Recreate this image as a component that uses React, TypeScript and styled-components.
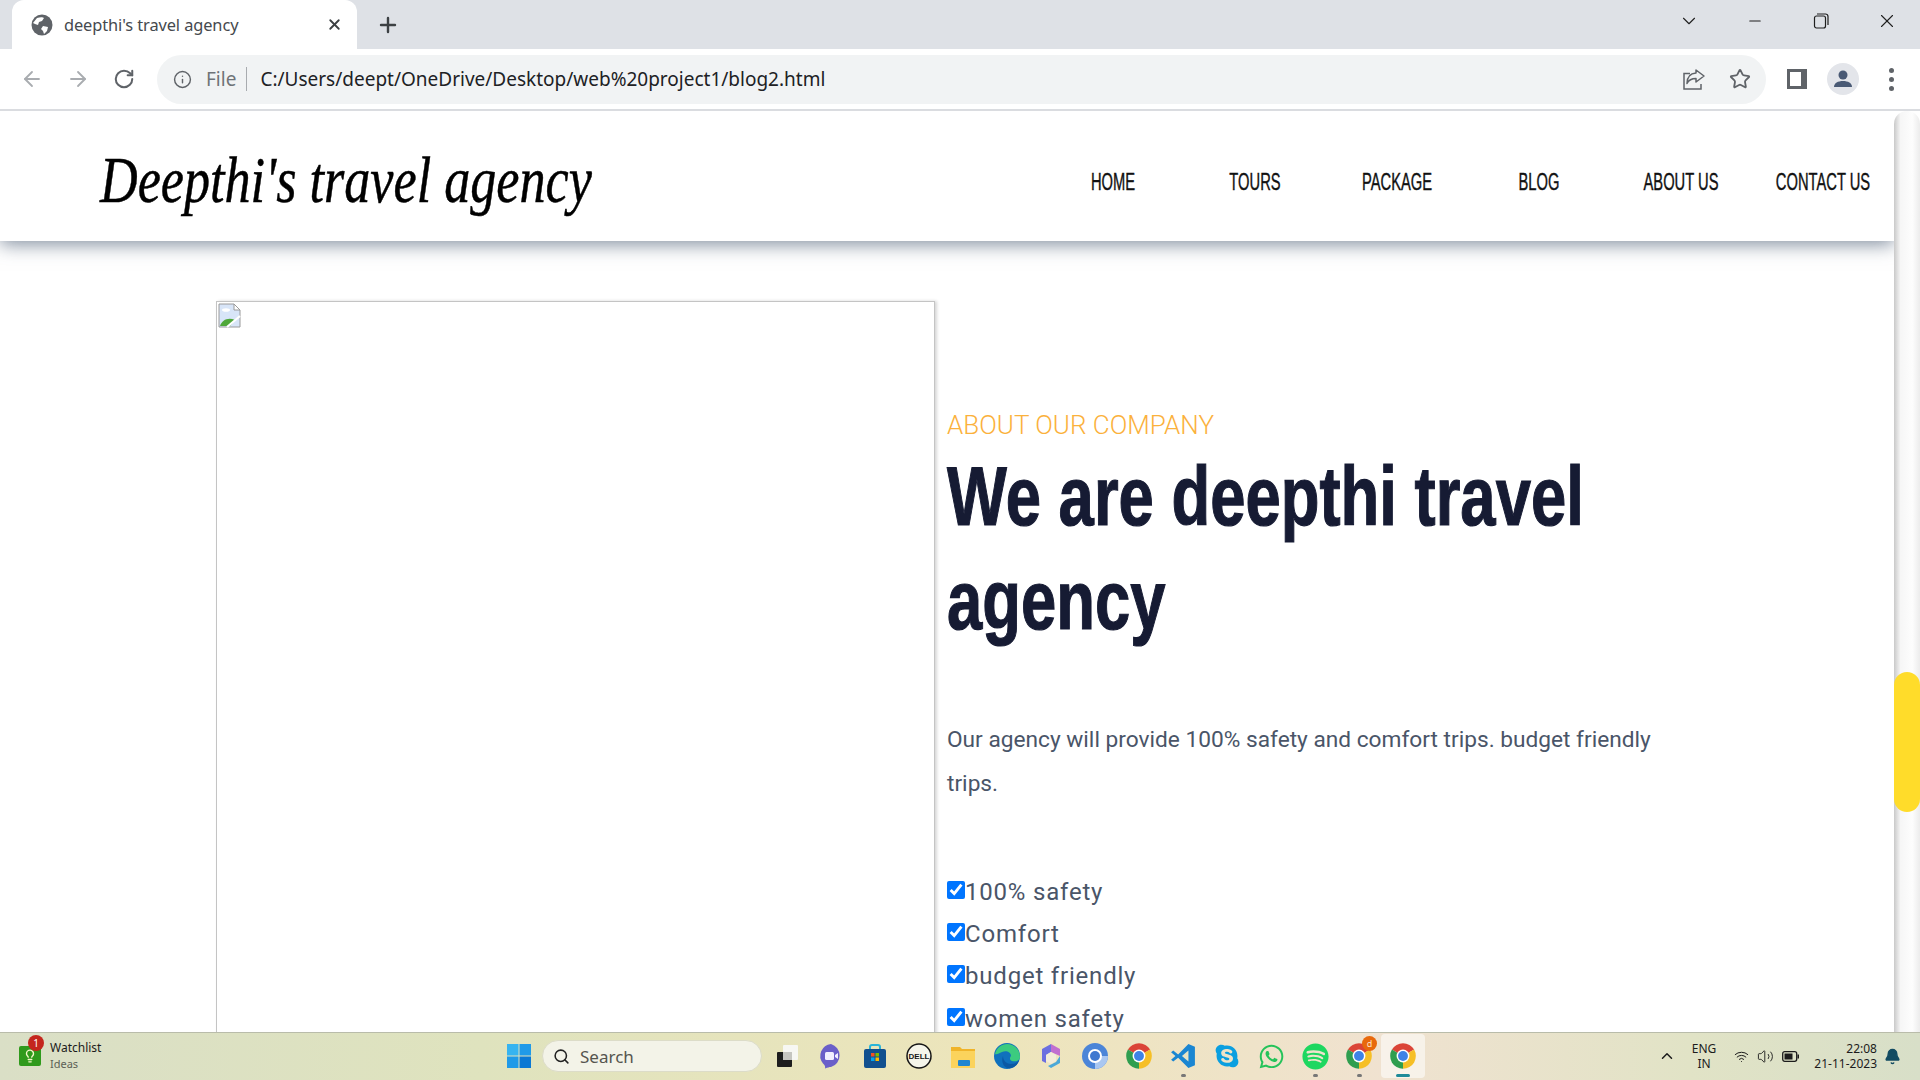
import styled, { createGlobalStyle } from "styled-components";
import { ArrowLeft, ArrowRight, RotateCw, Info, Star, X, Plus, ChevronDown, ChevronUp, Minus, Search, Wifi, Volume2, Bell, Lightbulb } from "lucide-react";
import { FaSpotify, FaWhatsapp, FaSkype } from "react-icons/fa";

const Global = createGlobalStyle`
  html, body { margin: 0; padding: 0; height: 100%; overflow: hidden; background: #fff; }
  * { box-sizing: border-box; }
`;

const Screen = styled.div`
  display: flex;
  flex-direction: column;
  width: 1920px;
  height: 1080px;
  overflow: hidden;
  font-family: "Noto Sans", "Open Sans", sans-serif;
`;

const TabStrip = styled.div`
  display: flex;
  align-items: stretch;
  height: 49px;
  flex: none;
  padding-left: 12px;
  background: #dee1e6;
`;

const Tab = styled.div`
  display: flex;
  align-items: center;
  width: 345px;
  padding: 0 14px 0 19px;
  background: #fff;
  border-radius: 12px 12px 0 0;
  color: #45494e;
  font-size: 16.4px;
`;

const TabTitle = styled.span`
  flex: 1;
  margin-left: 11px;
  letter-spacing: -0.1px;
`;

const NewTab = styled.div`
  display: flex;
  align-items: center;
  justify-content: center;
  width: 32px;
  margin-left: 15px;
  color: #3c4043;
`;

const WindowControls = styled.div`
  display: flex;
  margin-left: auto;
  color: #1f1f1f;
`;

const WindowButton = styled.div`
  display: flex;
  align-items: center;
  justify-content: center;
  width: 66px;
  height: 42px;
`;

const Toolbar = styled.div`
  display: flex;
  align-items: center;
  flex: none;
  height: 62px;
  padding-left: 9px;
  background: #fff;
  border-bottom: 2px solid #dadce0;
`;

const NavButton = styled.div<{ $dim?: boolean }>`
  display: flex;
  align-items: center;
  justify-content: center;
  width: 46px;
  color: ${(p) => (p.$dim ? "#a9acb0" : "#5f6368")};
`;

const AddressBar = styled.div`
  display: flex;
  align-items: center;
  width: 1609px;
  height: 49px;
  margin-left: 10px;
  padding: 0 15px 0 16px;
  background: #f1f3f4;
  border-radius: 25px;
  color: #5f6368;
  font-size: 19px;
`;

const FileLabel = styled.span`
  margin-left: 14px;
  padding-right: 10px;
  border-right: 1px solid #a8abaf;
  line-height: 24px;
  color: #6f7378;
`;

const Url = styled.span`
  flex: 1;
  margin-left: 13px;
  color: #202124;
`;

const BarIcons = styled.div`
  display: flex;
  gap: 23px;
  align-items: center;
`;

const Avatar = styled.div`
  display: flex;
  align-items: center;
  justify-content: center;
  width: 32px;
  height: 32px;
  border-radius: 50%;
  background: #e3e5ea;
`;

const ToolbarEnd = styled.div`
  display: flex;
  align-items: center;
  margin-left: 21px;
  gap: 20px;
`;

const MenuDots = styled.div`
  display: flex;
  flex-direction: column;
  gap: 4px;
  margin-left: 10px;
  & > i {
    display: block;
    width: 5px;
    height: 5px;
    border-radius: 50%;
    background: #5f6368;
  }
`;

const Viewport = styled.div`
  display: flex;
  flex: 1;
  min-height: 0;
`;

const Page = styled.div`
  flex: 1;
  min-width: 0;
  overflow: hidden;
  background: #fff;
`;

const Header = styled.header`
  position: relative;
  z-index: 2;
  display: flex;
  align-items: center;
  justify-content: space-between;
  height: 130px;
  padding-left: 100px;
  background: #fff;
  box-shadow: 0 3px 18px rgba(70, 88, 112, 0.7);
`;

const Logo = styled.div`
  width: 500px;
  margin-top: 8px;
  font-family: "Liberation Serif", serif;
  font-style: italic;
  font-size: 66px;
  line-height: 76px;
  color: #000;
  white-space: nowrap;
  -webkit-text-stroke: 0.5px #000;
  transform: scaleX(0.79);
  transform-origin: left center;
`;

const Menu = styled.nav`
  display: flex;
  margin-top: 12px;
`;

const MenuItem = styled.a`
  display: flex;
  justify-content: center;
  width: 142px;
  font-family: "Liberation Sans", sans-serif;
  font-size: 23px;
  white-space: nowrap;
  color: #111;
  -webkit-text-stroke: 0.4px #111;
  transform: scaleX(0.64);
`;

const Hero = styled.section`
  display: flex;
  padding: 60px 0 0 216px;
`;

const Photo = styled.div`
  flex: none;
  width: 719px;
  height: 900px;
  border: 1px solid #c4c4c4;
  border-bottom: 0;
  box-shadow: 2px 0 3px rgba(0, 0, 0, 0.16);
  padding: 1px;
`;

const Copy = styled.div`
  width: 720px;
  margin-left: 12px;
  padding-top: 105px;
`;

const Eyebrow = styled.div`
  font-family: Roboto, sans-serif;
  font-weight: 300;
  font-size: 26px;
  line-height: 38px;
  color: #fbb13c;
`;

const Title = styled.h1`
  width: 923px;
  margin: 0;
  font-family: "Liberation Sans", sans-serif;
  font-weight: 700;
  font-size: 84px;
  line-height: 104px;
  color: #161b33;
  -webkit-text-stroke: 1.2px #161b33;
  transform: scaleX(0.755);
  transform-origin: left center;
`;

const Lead = styled.p`
  width: 720px;
  margin: 66px 0 0;
  font-family: Roboto, sans-serif;
  font-size: 22.7px;
  line-height: 44px;
  color: #4a5568;
`;

const Checks = styled.div`
  display: flex;
  flex-direction: column;
  margin-top: 65px;
`;

const Check = styled.label`
  display: flex;
  align-items: center;
  height: 42.2px;
  font-family: Roboto, sans-serif;
  font-size: 24px;
  letter-spacing: 0.8px;
  color: #4a5568;
  & > input {
    width: 18px;
    height: 18px;
    margin: -4px 0 0 0;
  }
`;

const Rail = styled.div`
  position: relative;
  flex: none;
  width: 26px;
  background: #fff;
`;

const RailTrack = styled.div`
  height: 100%;
  border-radius: 13px 13px 0 0;
  background: linear-gradient(90deg, #c9c9c9, #f6f6f6 25%, #fdfdfd 70%, #ececec);
`;

const Thumb = styled.div`
  position: absolute;
  left: 0;
  right: 0;
  top: 561px;
  height: 140px;
  border-radius: 13px;
  background: #ffdc2a;
`;

const Taskbar = styled.footer`
  display: flex;
  align-items: center;
  flex: none;
  height: 48px;
  padding-bottom: 1px;
  border-top: 1px solid #b9bcaa;
  background: linear-gradient(90deg, #dadfc6 0%, #dfe3be 25%, #ede5bb 52%, #f0e2d0 72%, #e1e3c6 88%, #d8dfc8 100%);
`;

const Widget = styled.div`
  display: flex;
  align-items: center;
  width: 497px;
  padding-left: 19px;
`;

const WidgetIcon = styled.div`
  position: relative;
  display: flex;
  align-items: center;
  justify-content: center;
  width: 22px;
  height: 20px;
  border-radius: 2px;
  background: #2f9a1c;
`;

const WidgetBadge = styled.span`
  position: absolute;
  top: -11px;
  left: 9px;
  width: 16px;
  height: 16px;
  border-radius: 50%;
  background: #c4261d;
  color: #fff;
  font-size: 10px;
  line-height: 16px;
  text-align: center;
`;

const WidgetText = styled.div`
  margin-left: 9px;
  font-size: 12px;
  line-height: 16px;
  color: #1b1b1b;
  & > small {
    display: block;
    font-size: 11px;
    color: #5c5f55;
  }
`;

const Slot = styled.div<{ $active?: boolean; $dot?: boolean }>`
  position: relative;
  display: flex;
  align-items: center;
  justify-content: center;
  width: 44px;
  height: 44px;
  border-radius: 4px;
  background: ${(p) => (p.$active ? "rgba(255,255,255,.55)" : "transparent")};
  &::after {
    content: "";
    display: ${(p) => (p.$active || p.$dot ? "block" : "none")};
    position: absolute;
    bottom: 1px;
    left: 50%;
    width: ${(p) => (p.$active ? "14px" : "5px")};
    height: 3px;
    margin-left: ${(p) => (p.$active ? "-7px" : "-2px")};
    border-radius: 2px;
    background: ${(p) => (p.$active ? "#1f8a99" : "#777")};
  }
`;

const SearchPill = styled.div`
  display: flex;
  align-items: center;
  width: 220px;
  height: 32px;
  margin: 0 3px 0 1px;
  padding-left: 10px;
  border: 1px solid #dcdcc8;
  border-radius: 16px;
  background: #f3f3e8;
  color: #55554f;
  font-size: 17px;
  gap: 10px;
`;

const CountBadge = styled.span`
  position: absolute;
  top: 2px;
  right: 4px;
  width: 15px;
  height: 15px;
  border-radius: 50%;
  background: #e8690c;
  color: #ffe2c8;
  font-size: 9px;
  line-height: 15px;
  text-align: center;
`;

const Tray = styled.div`
  display: flex;
  align-items: center;
  margin-left: auto;
  color: #1c1c1c;
`;

const Lang = styled.div`
  width: 44px;
  margin-left: 6px;
  font-size: 12px;
  line-height: 15px;
  text-align: center;
`;

const TrayIcons = styled.div`
  display: flex;
  align-items: center;
  gap: 8px;
  margin-left: 8px;
`;

const Clock = styled.div`
  width: 66px;
  margin-left: 12px;
  font-size: 12px;
  line-height: 15px;
  text-align: right;
  white-space: nowrap;
`;

const BellBox = styled.div`
  display: flex;
  justify-content: center;
  width: 30px;
  margin-right: 13px;
  color: #124b62;
`;

const ChromeLogo = () => (
  <svg width="28" height="28" viewBox="0 0 48 48">
    <path d="M24 24L4.95 13A22 22 0 0 1 43.05 13Z" fill="#db4437" />
    <path d="M24 24L43.05 13A22 22 0 0 1 24 46Z" fill="#f6bf26" />
    <path d="M24 24L24 46A22 22 0 0 1 4.95 13Z" fill="#2f9e4f" />
    <circle cx="24" cy="24" r="11" fill="#fff" />
    <circle cx="24" cy="24" r="8.5" fill="#3f83e6" />
  </svg>
);

const Globe = () => (
  <svg width="22" height="22" viewBox="0 0 22 22">
    <circle cx="11" cy="11" r="10.5" fill="#5f6368" />
    <path d="M6 4c3-1 6-1 7 0l-2 3-3 1-1 3-3-1-2-1zM12 12l5 1-1 4-3 3-1-3-2-2z" fill="#fff" />
  </svg>
);

const ShareIcon = () => (
  <svg width="24" height="24" viewBox="0 0 24 24" fill="none" stroke="#5f6368" strokeWidth="1.5">
    <path d="M14 3l8 6-8 6v-3.5c-4 0-7 1-9 5 0-6 3-10 9-10.500z" strokeLinejoin="round" />
    <path d="M8 6.500H2V22h17v-5" />
  </svg>
);

const SidePanel = () => (
  <svg width="20" height="20" viewBox="0 0 20 20">
    <rect width="20" height="20" fill="#5f6368" />
    <rect x="3" y="3" width="11" height="14" fill="#fff" />
  </svg>
);

const AvatarFigure = () => (
  <svg width="20" height="20" viewBox="0 0 20 20" fill="#4a5a75">
    <circle cx="10" cy="6" r="4.500" />
    <path d="M1 18c0-4 4-6 9-6s9 2 9 6z" />
  </svg>
);

const RestoreIcon = () => (
  <svg width="16" height="16" viewBox="0 0 16 16" fill="none" stroke="#1f1f1f" strokeWidth="1.2">
    <rect x="1.500" y="3" width="11" height="12" rx="2" />
    <path d="M4 1h8.500a2.500 2.500 0 0 1 2.500 2.500V12" />
  </svg>
);

const BrokenImage = () => (
  <svg width="23" height="25" viewBox="0 0 23 25">
    <path d="M1 1h15l6 6v17H1z" fill="#d8e5f8" stroke="#9a9a9a" />
    <path d="M16 1v6h6z" fill="#fff" stroke="#9a9a9a" />
    <ellipse cx="8" cy="7" rx="4" ry="1.800" fill="#fff" />
    <path d="M2 23c2-6 8-9 15-6l-5 6z" fill="#4fa83a" />
    <path d="M9 24l13-11" stroke="#fff" strokeWidth="2.200" />
  </svg>
);

const WindowsLogo = () => (
  <svg width="24" height="24" viewBox="0 0 24 24">
    <rect width="11.500" height="11.500" fill="#36b4f0" />
    <rect x="12.500" width="11.500" height="11.500" fill="#1f9ae8" />
    <rect y="12.500" width="11.500" height="11.500" fill="#1f9ae8" />
    <rect x="12.500" y="12.500" width="11.500" height="11.500" fill="#0a78d4" />
  </svg>
);

const TaskView = () => (
  <svg width="24" height="24" viewBox="0 0 24 24">
    <rect x="2" y="8" width="15" height="15" rx="1" fill="#1d1d1d" />
    <rect x="8" y="1" width="15" height="15" rx="1" fill="#f7f7f3" />
    <rect x="8" y="8" width="9" height="8" fill="#c5c5c0" />
  </svg>
);

const MeetIcon = () => (
  <svg width="26" height="26" viewBox="0 0 26 26">
    <path d="M13 1a12 12 0 0 1 0 23c-2 0-3 .5-6 1.500.5-2 0-3-2-5A12 12 0 0 1 13 1z" fill="#6a5fc9" />
    <rect x="7" y="9" width="9" height="8" rx="1.500" fill="#f2f0ff" />
    <path d="M17 12l3-2v6l-3-2z" fill="#f2f0ff" />
  </svg>
);

const StoreIcon = () => (
  <svg width="26" height="26" viewBox="0 0 26 26">
    <path d="M8 6V4a2 2 0 0 1 2-2h6a2 2 0 0 1 2 2v2" fill="none" stroke="#29b4d8" strokeWidth="2" />
    <rect x="2" y="6" width="22" height="19" rx="2" fill="#11508f" />
    <rect x="9" y="10" width="3.500" height="3.500" fill="#f25022" />
    <rect x="13.500" y="10" width="3.500" height="3.500" fill="#7fba00" />
    <rect x="9" y="14.500" width="3.500" height="3.500" fill="#00a4ef" />
    <rect x="13.500" y="14.500" width="3.500" height="3.500" fill="#ffb900" />
  </svg>
);

const DellIcon = () => (
  <svg width="26" height="26" viewBox="0 0 26 26">
    <circle cx="13" cy="13" r="12" fill="#f5f5ea" stroke="#161616" strokeWidth="1.500" />
    <text x="13" y="16" textAnchor="middle" fontFamily="Liberation Sans" fontWeight="700" fontSize="8" fill="#161616">DELL</text>
  </svg>
);

const FolderIcon = () => (
  <svg width="26" height="26" viewBox="0 0 26 26">
    <path d="M1 4h9l2 2h13v19H1z" fill="#f0b429" />
    <rect x="1" y="8" width="24" height="17" fill="#fbd35c" />
    <rect x="8" y="17" width="12" height="6" rx="1" fill="#1f86d0" />
  </svg>
);

const EdgeIcon = () => (
  <svg width="28" height="28" viewBox="0 0 28 28">
    <circle cx="14" cy="14" r="13" fill="#1071bd" />
    <path d="M2 12C4 4 12 0 19 3c5 2 8 7 8 12 0 4-5 5-8 4-3-1-2-4-1-5 0-4-5-6-9-4-3 1-5 3-7 2z" fill="#3ccb7f" />
    <path d="M10 14c0 5 4 8 8 8 3 0 6-1 8-4-1 5-6 9-11 8-5-1-7-7-5-12z" fill="#0c59a4" />
  </svg>
);

const OfficeIcon = () => (
  <svg width="26" height="26" viewBox="0 0 26 26">
    <path d="M13 1l9 5v7l-9-4z" fill="#c06fd0" />
    <path d="M22 13v7l-9 5 -3-2 8-4z" fill="#4aa8d8" />
    <path d="M4 6l9-5v8l-5 3v8l-4-2z" fill="#6b6fe0" />
    <path d="M8 12l5-3 5 3v6l-5 3-5-3z" fill="#f2ecd8" />
  </svg>
);

const ChromiumIcon = () => (
  <svg width="28" height="28" viewBox="0 0 28 28">
    <circle cx="14" cy="14" r="13" fill="#4b85d8" />
    <path d="M14 14L27 14A13 13 0 0 1 14 27Z" fill="#a9c7f1" />
    <circle cx="14" cy="14" r="7" fill="#fff" />
    <circle cx="14" cy="14" r="5" fill="#3f78d0" />
  </svg>
);

const VsCodeIcon = () => (
  <svg width="26" height="26" viewBox="0 0 24 24">
    <path d="M17 1L7.500 10.500 3 7 1 8.500 5 12l-4 3.500L3 17l4.500-3.500L17 23l6-2.500v-17z" fill="#1a86d2" />
    <path d="M17 7l-6 5 6 5z" fill="#e9e4c4" />
  </svg>
);

const BatteryIcon = () => (
  <svg width="17" height="11" viewBox="0 0 17 11">
    <rect x=".7" y=".7" width="14" height="9.600" rx="2" fill="none" stroke="#1c1c1c" strokeWidth="1.300" />
    <rect x="2.500" y="2.500" width="8" height="6" fill="#1c1c1c" />
    <rect x="15.500" y="3.500" width="1.500" height="4" fill="#1c1c1c" />
  </svg>
);

const checks = ["100% safety", "Comfort", "budget friendly", "women safety"];
const menu = ["HOME", "TOURS", "PACKAGE", "BLOG", "ABOUT US", "CONTACT US"];

export default function App() {
  return (
    <Screen>
      <Global />
      <TabStrip>
        <Tab>
          <Globe />
          <TabTitle>deepthi's travel agency</TabTitle>
          <X size={17} strokeWidth={2.6} color="#3c4043" />
        </Tab>
        <NewTab>
          <Plus size={24} strokeWidth={2.4} />
        </NewTab>
        <WindowControls>
          <WindowButton><ChevronDown size={22} strokeWidth={1.2} /></WindowButton>
          <WindowButton><Minus size={18} strokeWidth={1.4} /></WindowButton>
          <WindowButton><RestoreIcon /></WindowButton>
          <WindowButton><X size={22} strokeWidth={1.2} /></WindowButton>
        </WindowControls>
      </TabStrip>
      <Toolbar>
        <NavButton $dim><ArrowLeft size={24} strokeWidth={1.8} /></NavButton>
        <NavButton $dim><ArrowRight size={24} strokeWidth={1.8} /></NavButton>
        <NavButton><RotateCw size={22} strokeWidth={2.2} /></NavButton>
        <AddressBar>
          <Info size={19} strokeWidth={1.8} />
          <FileLabel>File</FileLabel>
          <Url>C:/Users/deept/OneDrive/Desktop/web%20project1/blog2.html</Url>
          <BarIcons>
            <ShareIcon />
            <Star size={22} strokeWidth={2} />
          </BarIcons>
        </AddressBar>
        <ToolbarEnd>
          <SidePanel />
          <Avatar><AvatarFigure /></Avatar>
          <MenuDots><i /><i /><i /></MenuDots>
        </ToolbarEnd>
      </Toolbar>
      <Viewport>
        <Page>
          <Header>
            <Logo>Deepthi's travel agency</Logo>
            <Menu>
              {menu.map((m) => <MenuItem key={m}>{m}</MenuItem>)}
            </Menu>
          </Header>
          <Hero>
            <Photo><BrokenImage /></Photo>
            <Copy>
              <Eyebrow>ABOUT OUR COMPANY</Eyebrow>
              <Title>We are deepthi travel agency</Title>
              <Lead>Our agency will provide 100% safety and comfort trips. budget friendly trips.</Lead>
              <Checks>
                {checks.map((c) => (
                  <Check key={c}><input type="checkbox" checked readOnly />{c}</Check>
                ))}
              </Checks>
            </Copy>
          </Hero>
        </Page>
        <Rail>
          <RailTrack />
          <Thumb />
        </Rail>
      </Viewport>
      <Taskbar>
        <Widget>
          <WidgetIcon>
            <Lightbulb size={14} color="#f4f7c8" strokeWidth={2.4} />
            <WidgetBadge>1</WidgetBadge>
          </WidgetIcon>
          <WidgetText>Watchlist<small>Ideas</small></WidgetText>
        </Widget>
        <Slot><WindowsLogo /></Slot>
        <SearchPill><Search size={17} strokeWidth={2.2} color="#222" />Search</SearchPill>
        <Slot><TaskView /></Slot>
        <Slot><MeetIcon /></Slot>
        <Slot><StoreIcon /></Slot>
        <Slot><DellIcon /></Slot>
        <Slot><FolderIcon /></Slot>
        <Slot><EdgeIcon /></Slot>
        <Slot><OfficeIcon /></Slot>
        <Slot><ChromiumIcon /></Slot>
        <Slot><ChromeLogo /></Slot>
        <Slot $dot><VsCodeIcon /></Slot>
        <Slot><FaSkype size={26} color="#0a9fe0" /></Slot>
        <Slot><FaWhatsapp size={27} color="#25c35a" /></Slot>
        <Slot $dot><FaSpotify size={27} color="#1ed760" /></Slot>
        <Slot $dot><ChromeLogo /><CountBadge>d</CountBadge></Slot>
        <Slot $active><ChromeLogo /></Slot>
        <Tray>
          <ChevronUp size={18} strokeWidth={2} />
          <Lang>ENG<br />IN</Lang>
          <TrayIcons>
            <Wifi size={15} strokeWidth={1.6} />
            <Volume2 size={17} strokeWidth={1.3} />
            <BatteryIcon />
          </TrayIcons>
          <Clock>22:08<br />21-11-2023</Clock>
          <BellBox><Bell size={17} fill="#124b62" /></BellBox>
        </Tray>
      </Taskbar>
    </Screen>
  );
}
